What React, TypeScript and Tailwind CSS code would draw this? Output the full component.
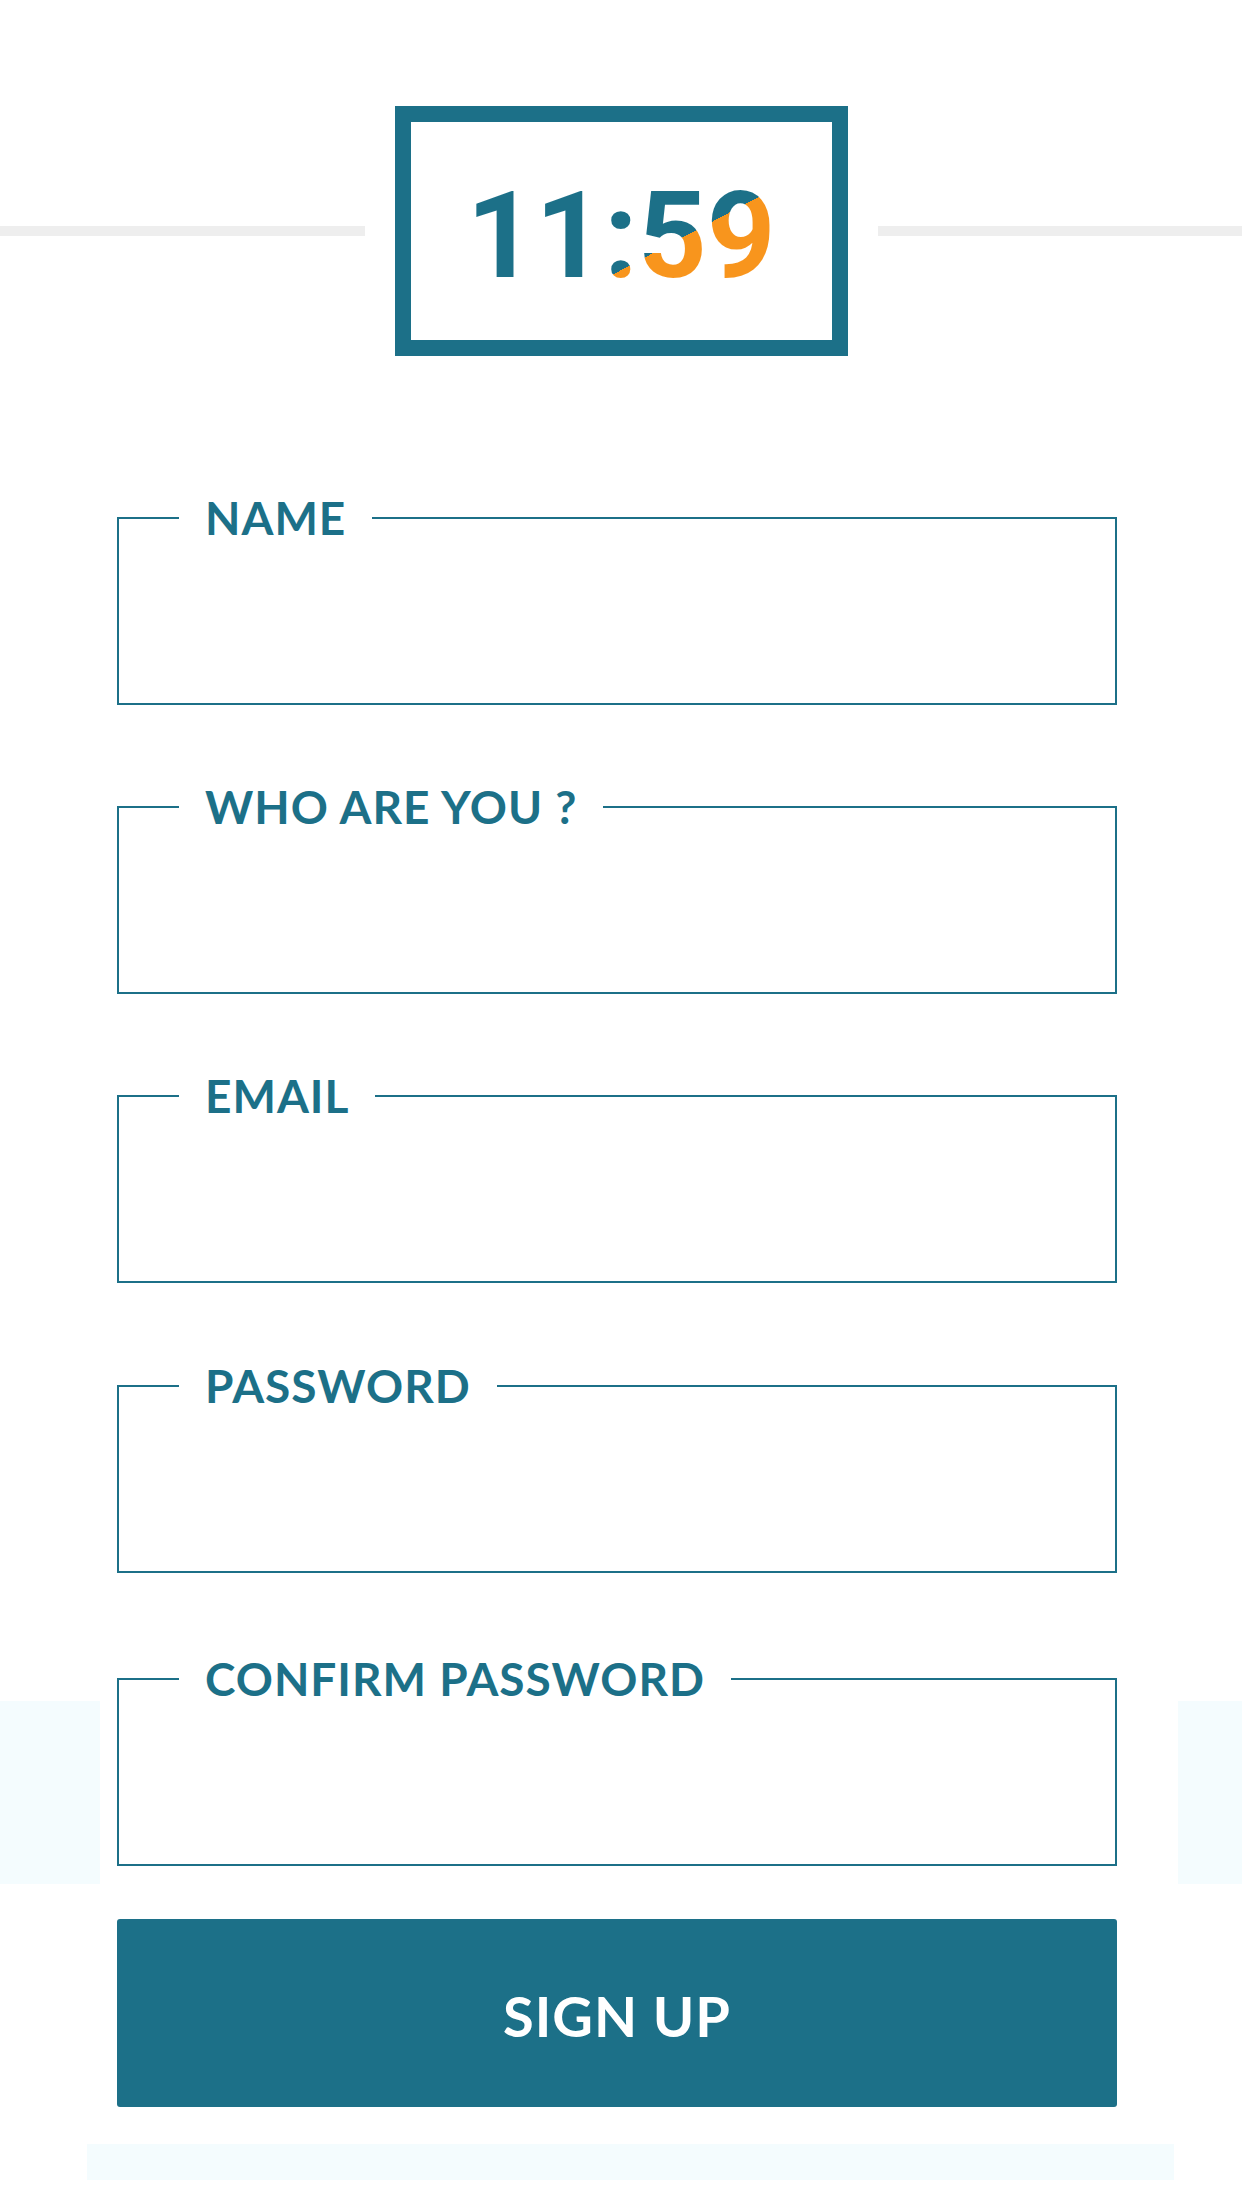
const fields = [
  { label: 'NAME', type: 'text', gap: 'mt-[139px]' },
  { label: 'WHO ARE YOU ?', type: 'text', gap: 'mt-[79px]' },
  { label: 'EMAIL', type: 'email', gap: 'mt-[79px]' },
  { label: 'PASSWORD', type: 'password', gap: 'mt-[80px]' },
  { label: 'CONFIRM PASSWORD', type: 'password', gap: 'mt-[83px]' },
];

function Clock() {
  return (
    <header className="flex items-center gap-[30px]">
      <div className="h-[10px] flex-1 bg-[#eeeeee]" />
      <div className="flex h-[250px] w-[453px] items-center justify-center border-[16px] border-[#1c7088] pt-[10px]">
        <span className="bg-[linear-gradient(152deg,#1c7088_62%,#f8951d_62%)] bg-clip-text font-['Roboto',sans-serif] text-[120px] font-bold leading-none text-transparent">
          11:59
        </span>
      </div>
      <div className="h-[10px] flex-1 bg-[#eeeeee]" />
    </header>
  );
}

export default function App() {
  return (
    <div className="relative min-h-[2208px] overflow-hidden bg-white font-['Lato','Open_Sans',sans-serif]">
      {/* pale band behind the last field */}
      <div className="absolute inset-x-0 top-[1701px] h-[183px] bg-[#f4fcfe]" />

      <div className="relative pt-[106px]">
        <Clock />

        <form className="ml-[100px] w-[1078px] bg-white pl-[17px]">
          {fields.map((f) => (
            <fieldset
              key={f.label}
              className={`${f.gap} w-[1000px] border-2 border-[#1c7088]`}
            >
              <legend className="ml-[60px] px-[26px] text-[46px] font-bold leading-none tracking-[1px] text-[#1c7088]">
                {f.label}
              </legend>
              <input
                type={f.type}
                className="block h-[162px] w-full bg-transparent px-[24px] text-[40px] text-[#1c7088] outline-none"
              />
            </fieldset>
          ))}

          <button
            type="button"
            className="mt-[53px] flex h-[188px] w-[1000px] items-center justify-center rounded-[3px] bg-[#1c7088] pt-[6px] text-[56px] font-bold tracking-[1px] text-white"
          >
            SIGN UP
          </button>
        </form>

        <div className="ml-[87px] mt-[37px] h-[36px] w-[1087px] bg-[#f4fcfe]" />
      </div>
    </div>
  );
}
